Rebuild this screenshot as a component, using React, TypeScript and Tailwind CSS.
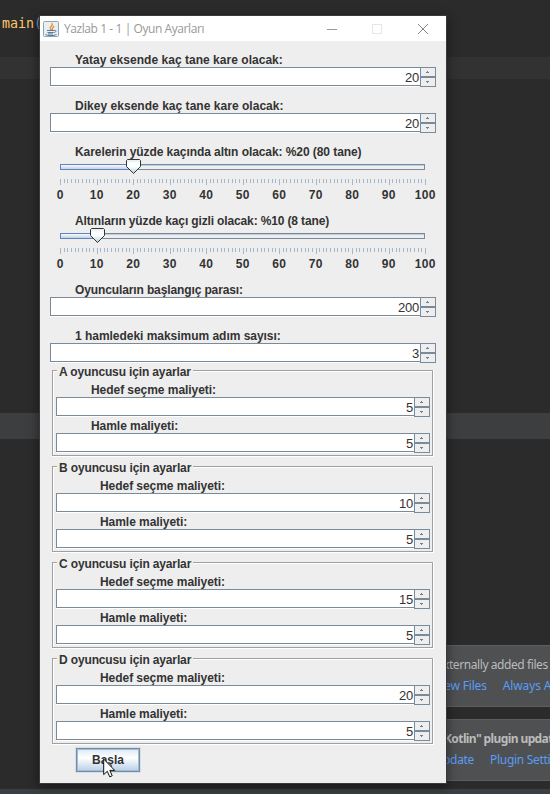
import React from "react";

type FieldProps = { label: string; value: string; indent: string; width: string };

function Label({ children, className = "" }: { children: React.ReactNode; className?: string }) {
  return (
    <div className={`h-4 whitespace-nowrap pt-px leading-4 text-[12px] font-bold text-[#333333] ${className}`}>{children}</div>
  );
}

function StepButton({ up }: { up?: boolean }) {
  return (
    <div className="flex h-[10px] w-4 items-center justify-center border border-[#7a8a99] bg-[#eeeeee]">
      <svg width="4" height="2" viewBox="0 0 4 2" shapeRendering="crispEdges" fill="#6f8091">
        {up ? <path d="M1 0h1v1h1v1H0V1h1z" /> : <path d="M0 0h3v1H2v1H1V1H0z" />}
      </svg>
    </div>
  );
}

function Field({ label, value, indent, width }: FieldProps) {
  return (
    <div className={width}>
      <Label className={indent}>{label}</Label>
      <div className="flex h-5">
        <div className="flex h-5 flex-1 flex-col border-b border-white">
          <div className="h-[19px] border-y border-l border-[#7a8a99] bg-white pr-px pt-[2px] text-right text-[13px] leading-4 tracking-[-0.2px] text-[#333333]">
            {value}
          </div>
        </div>
        <div className="flex flex-col">
          <StepButton up />
          <StepButton />
        </div>
      </div>
    </div>
  );
}

const marks = [0, 10, 20, 30, 40, 50, 60, 70, 80, 90, 100];
const ticks = Array.from({ length: 101 }, (_, i) => i);

function Slider({ label, value, spacing }: { label: string; value: number; spacing: string }) {
  const thumb = Math.round(value * 3.65) + 10;
  return (
    <div className="h-[59px] w-[386px]">
      <Label className={`pl-[25px] ${spacing}`}>{label}</Label>
      <svg width="386" height="28" viewBox="0 0 386 28" className="block">
        <defs>
          <linearGradient id="fill" x1="0" y1="0" x2="0" y2="1">
            <stop offset="0" stopColor="#ffffff" />
            <stop offset="1" stopColor="#b8cfe5" />
          </linearGradient>
          <linearGradient id="thumb" x1="0" y1="0" x2="0" y2="1">
            <stop offset="0" stopColor="#dcebf4" />
            <stop offset="0.3" stopColor="#ffffff" />
            <stop offset="0.5" stopColor="#ffffff" />
            <stop offset="1" stopColor="#a9cfe2" />
          </linearGradient>
        </defs>
        <rect x="10.5" y="5.5" width="364" height="5" fill="#eeeeee" stroke="#7a8a99" />
        <path d="M11 6.5H374" stroke="#b8cfe5" />
        <rect x="10.5" y="5.5" width={thumb - 10} height="5" fill="url(#fill)" stroke="#6382bf" />
        <g shapeRendering="crispEdges" fill="#a3b8cc">
          {ticks.map((t) => (
            <rect key={t} x={10 + Math.round(t * 3.65)} y="20" width="1" height={t % 10 === 0 ? 6 : 4} />
          ))}
        </g>
        <path d={`M${thumb - 5.5} .5h12l1 1v6l-7 7-7-7v-6z`} fill="url(#thumb)" stroke="#333333" />
      </svg>
      <div className="ml-[-8px] flex h-[15px] w-[402px] text-[12px] font-bold leading-4 text-[#333333]">
        {marks.map((m) => (
          <span key={m} className="w-[36.5px] shrink-0 text-center tracking-[0.3px]">{m}</span>
        ))}
      </div>
    </div>
  );
}

function PlayerGroup({ title, target, indent }: { title: string; target: string; indent: string }) {
  return (
    <section className="h-24 pl-[2px] pt-[7px]">
      <div className="h-[87px] w-[382px] border-b border-r border-white">
        <div className="h-[86px] w-[381px] border border-[#a0a0a0] shadow-[inset_1px_1px_0_white]">
          <div className="mt-[-8px] flex pl-1">
            <Label className="bg-[#eeeeee] px-[2px] tracking-[-0.14px]">{title}</Label>
          </div>
          <div className="flex flex-col pl-[3px] pt-[2px] tracking-[-0.05px]">
            <Field label="Hedef seçme maliyeti:" value={target} indent={indent} width="w-[374px]" />
            <Field label="Hamle maliyeti:" value="5" indent={indent} width="w-[374px]" />
          </div>
        </div>
      </div>
    </section>
  );
}

function JavaIcon() {
  return (
    <svg width="16" height="16" viewBox="0 0 16 16" fill="none">
      <rect x=".5" y=".5" width="15" height="15" rx="1" fill="#e9eef1" stroke="#8fa5b1" />
      <path d="M8.5 9C4.5 6 11 5.5 9 2M8.8 9c2-1.5-.5-2 2.5-4" stroke="#e58a2b" strokeWidth="1.2" />
      <path d="M4 9.5h7M4.5 11.5h6M5 13h5M11 9.5c3-.7 2.3 2-.2 2" stroke="#557d9b" />
      <path d="M2.5 13.5c2 1.5 9 1.5 11 0" stroke="#557d9b" />
    </svg>
  );
}

function Notice({ text, links, textStyle, linkStyle, className }: { text: string; links: [string, string]; textStyle: string; linkStyle: string; className: string }) {
  return (
    <div className={`absolute left-[430px] w-[120px] overflow-hidden whitespace-nowrap border-y border-[#5b5e60] bg-[#4e5052] text-[12px] leading-4 ${className}`}>
      <div className={`pt-[11px] text-[#bbbbbb] ${textStyle}`}>{text}</div>
      <div className={`flex pt-[5px] text-[#589df6] ${linkStyle}`}>
        <span>{links[0]}</span>
        <span>{links[1]}</span>
      </div>
    </div>
  );
}

export default function App() {
  return (
    <div className="relative h-[794px] w-[550px] overflow-hidden bg-[#2b2b2b] font-['Liberation_Sans',Arial,sans-serif]">
      <div className="h-[57px] pl-[2px] pt-[16px] font-['DejaVu_Sans_Mono',monospace] text-[13.3px] leading-4 text-[#ffc66d]">
        main<span className="text-[#6897bb]">(</span>
      </div>
      <div className="h-[22px] bg-[#323232]" />
      <div className="mt-[334px] h-[26px] bg-[#3c3e40]" />
      <div className="mt-[350px] h-[5px] bg-[#3c3f41]" />

      <div className="font-['Noto_Sans','Open_Sans',sans-serif]">
        <Notice
          className="top-[645px] h-[62px]"
          text="xternally added files"
          links={["ew Files", "Always Add"]}
          textStyle="pl-[13px] tracking-[-0.42px]"
          linkStyle="gap-4 pl-[14px] tracking-[-0.15px]"
        />
        <Notice
          className="top-[719px] h-[62px]"
          text={'Kotlin" plugin update'}
          links={["pdate", "Plugin Settings"]}
          textStyle="pl-[14px] font-bold tracking-[-0.6px]"
          linkStyle="gap-4 pl-[13px] tracking-[-0.3px]"
        />
      </div>

      <main className="absolute left-[40px] top-[16px] h-[767px] w-[406px] bg-[#eeeeee] shadow-[0_0_0_1px_#3a3a3a,0_3px_10px_2px_rgba(0,0,0,0.4)]">
        <header className="flex h-[25px] items-center bg-white pl-[3px]">
          <JavaIcon />
          <span className="ml-[5px] w-[263px] whitespace-nowrap font-['Open_Sans','Noto_Sans',sans-serif] text-[12px] leading-4 tracking-[-0.42px] text-[#999999]">
            Yazlab 1 - 1 | Oyun Ayarları
          </span>
          <svg width="104" height="12" viewBox="0 0 104 12" fill="none">
            <path d="M0 6.5h10" stroke="#999999" />
            <rect x="45.5" y="1.5" width="9" height="9" stroke="#e6e6e6" />
            <path d="M91 1l10 10M101 1L91 11" stroke="#888888" />
          </svg>
        </header>

        <div className="flex flex-col gap-[10px] pl-[10px] pt-[10px]">
          <Field label="Yatay eksende kaç tane kare olacak:" value="20" indent="pl-[25px] tracking-[0.03px]" width="w-[386px]" />
          <Field label="Dikey eksende kaç tane kare olacak:" value="20" indent="pl-[25px] tracking-[0.03px]" width="w-[386px]" />
          <Slider label="Karelerin yüzde kaçında altın olacak: %20 (80 tane)" value={20} spacing="tracking-[-0.07px]" />
          <Slider label="Altınların yüzde kaçı gizli olacak: %10 (8 tane)" value={10} spacing="tracking-[-0.14px]" />
          <Field label="Oyuncuların başlangıç parası:" value="200" indent="pl-[25px] tracking-[-0.12px]" width="w-[386px]" />
          <Field label="1 hamledeki maksimum adım sayısı:" value="3" indent="pl-[25px] tracking-[-0.03px]" width="w-[386px]" />
        </div>

        <div className="pl-[10px]">
          <PlayerGroup title="A oyuncusu için ayarlar" target="5" indent="pl-[35px]" />
          <PlayerGroup title="B oyuncusu için ayarlar" target="10" indent="pl-[44px]" />
          <PlayerGroup title="C oyuncusu için ayarlar" target="15" indent="pl-[44px]" />
          <PlayerGroup title="D oyuncusu için ayarlar" target="20" indent="pl-[44px]" />
        </div>

        <button className="ml-[36px] mt-[1px] block h-[24px] w-[64px] border border-[#7a8a99] bg-linear-to-b from-[#dde8f3] via-white via-40% to-[#b8cfe5] text-center text-[12px] font-bold leading-[23px] text-[#333333] shadow-[inset_0_0_0_1px_#9fbddb,0_0_0_1px_#cfe0ee]">
          Başla
        </button>
      </main>

      <svg className="absolute left-[103px] top-[758px]" width="13" height="20" viewBox="0 0 13 20">
        <path d="M.7 1v15.6l3.6-3.3 2.4 5.5 2.5-1-2.4-5.4h4.9z" fill="white" stroke="#111111" />
      </svg>
    </div>
  );
}
